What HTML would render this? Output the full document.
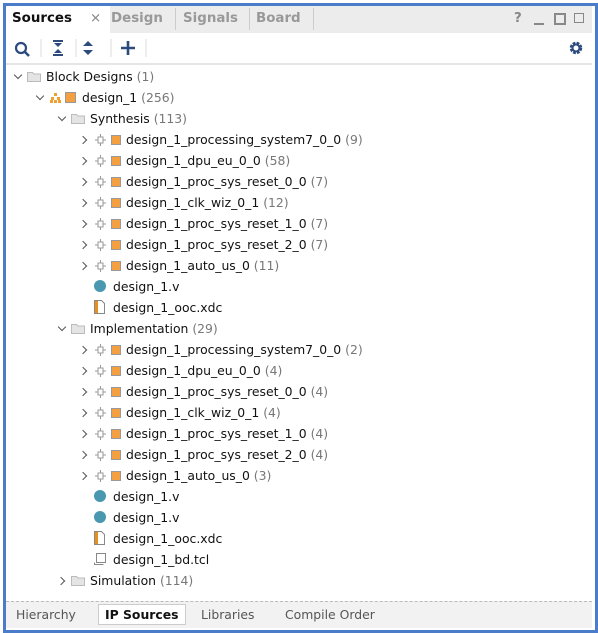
<!DOCTYPE html><html><head><style>
body{margin:0;width:598px;height:633px;background:#fff;font-family:"DejaVu Sans","Liberation Sans",sans-serif;font-size:12.4px;color:#111;position:relative;overflow:hidden}
.frame{position:absolute;left:3px;top:3px;width:589px;height:624px;border:3px solid #4a7cc9}
.tabs{position:absolute;left:6px;top:6px;width:586px;height:27px;background:#ececec}
.tab{position:absolute;top:0;height:27px;line-height:25px;font-weight:bold;color:#999;font-size:13.4px}
.tb{position:absolute;left:6px;top:33px;width:586px;height:30px;background:#fff;border-bottom:2px solid #e6e6e6}
.row{position:absolute;height:21px;line-height:21px;white-space:nowrap}
.cnt{color:#777}
.chev{position:absolute;width:5px;height:5px;border-right:1.4px solid #555;border-bottom:1.4px solid #555}
.bot{position:absolute;left:6px;top:601px;width:586px;height:26px;background:#f2f2f2;border-top:1px dashed #bbb}
.bt{position:absolute;top:5px;color:#555;font-size:12.4px}
</style></head><body>
<div class="frame"></div>
<div class="tabs">
 <div class="tab" style="left:0;width:98px;background:#fff;color:#111;padding-left:6px">Sources<span style="position:absolute;left:84px;color:#888;font-weight:normal">×</span></div>
 <div class="tab" style="left:105px">Design</div>
 <div style="position:absolute;left:169px;top:2px;width:1px;height:22px;background:#ccc"></div>
 <div class="tab" style="left:177px">Signals</div>
 <div style="position:absolute;left:243px;top:2px;width:1px;height:22px;background:#ccc"></div>
 <div class="tab" style="left:250px">Board</div>
 <div style="position:absolute;left:307px;top:2px;width:1px;height:22px;background:#ccc"></div>
 <div class="tab" style="left:508px;color:#888">?</div>
 <div style="position:absolute;left:528px;top:17px;width:10px;height:2px;background:#888"></div>
 <div style="position:absolute;left:548px;top:7px;width:8px;height:8px;border:2px solid #888"></div>
 <div style="position:absolute;left:568px;top:7px;width:8px;height:8px;border:1.5px solid #888"></div>
</div>
<div class="tb">
 <svg width="586" height="30" style="position:absolute;left:0;top:0">
  <circle cx="15" cy="15" r="5" fill="none" stroke="#2c4a7e" stroke-width="2.2"/><line x1="19" y1="19" x2="23" y2="23" stroke="#2c4a7e" stroke-width="2.5"/>
  <line x1="35" y1="6" x2="35" y2="24" stroke="#ddd"/>
  <g stroke="#2c4a7e" stroke-width="2" fill="none"><line x1="47" y1="8" x2="57" y2="8"/><line x1="47" y1="22" x2="57" y2="22"/></g>
  <path d="M48 10 L56 10 L52 14Z M48 20 L56 20 L52 16Z" fill="#2c4a7e"/>
  <line x1="70" y1="6" x2="70" y2="24" stroke="#ddd"/>
  <path d="M82 8 L87 13 L77 13Z M82 22 L87 17 L77 17Z" fill="#2c4a7e"/>
  <line x1="105" y1="6" x2="105" y2="24" stroke="#ddd"/>
  <path d="M122 8 V22 M115 15 H129" stroke="#2c4a7e" stroke-width="2.6"/>
  <line x1="140" y1="6" x2="140" y2="24" stroke="#ddd"/>
  <circle cx="570" cy="15" r="4.5" fill="none" stroke="#2c4a7e" stroke-width="3.5" stroke-dasharray="2.5 1.1"/><circle cx="570" cy="15" r="3.5" fill="none" stroke="#2c4a7e" stroke-width="2"/>
 </svg>
</div>
<div id="tree"></div>
<div class="bot">
 <span class="bt" style="left:10px">Hierarchy</span>
 <span class="bt" style="left:92px;top:2px;padding:2px 6px;background:#fff;border:1px solid #ccc;color:#111;font-weight:bold">IP Sources</span>
 <span class="bt" style="left:195px">Libraries</span>
 <span class="bt" style="left:279px">Compile Order</span>
</div>
<script>
var rows=[
[0,1,'f','Block Designs','(1)'],
[1,1,'bd','design_1','(256)'],
[2,1,'f','Synthesis','(113)'],
[3,2,'ip','design_1_processing_system7_0_0','(9)'],
[3,2,'ip','design_1_dpu_eu_0_0','(58)'],
[3,2,'ip','design_1_proc_sys_reset_0_0','(7)'],
[3,2,'ip','design_1_clk_wiz_0_1','(12)'],
[3,2,'ip','design_1_proc_sys_reset_1_0','(7)'],
[3,2,'ip','design_1_proc_sys_reset_2_0','(7)'],
[3,2,'ip','design_1_auto_us_0','(11)'],
[3,0,'v','design_1.v',''],
[3,0,'x','design_1_ooc.xdc',''],
[2,1,'f','Implementation','(29)'],
[3,2,'ip','design_1_processing_system7_0_0','(2)'],
[3,2,'ip','design_1_dpu_eu_0_0','(4)'],
[3,2,'ip','design_1_proc_sys_reset_0_0','(4)'],
[3,2,'ip','design_1_clk_wiz_0_1','(4)'],
[3,2,'ip','design_1_proc_sys_reset_1_0','(4)'],
[3,2,'ip','design_1_proc_sys_reset_2_0','(4)'],
[3,2,'ip','design_1_auto_us_0','(3)'],
[3,0,'v','design_1.v',''],
[3,0,'v','design_1.v',''],
[3,0,'x','design_1_ooc.xdc',''],
[3,0,'t','design_1_bd.tcl',''],
[2,2,'f','Simulation','(114)']];
var h='';
rows.forEach(function(r,i){
 var y=66+i*21, cx=15+r[0]*22, s='';
 if(r[1]==1) s+='<div class="chev" style="left:'+(cx)+'px;top:'+(y+6)+'px;transform:rotate(45deg)"></div>';
 if(r[1]==2) s+='<div class="chev" style="left:'+(cx-1)+'px;top:'+(y+8)+'px;transform:rotate(-45deg)"></div>';
 var ix=cx+12, tx;
 if(r[2]=='f'){s+='<svg style="position:absolute;left:'+ix+'px;top:'+(y+5)+'px" width="14" height="11"><path d="M0.5 1.5h5l1.5 1.5h6.5v7.5h-13z" fill="#e4e4e4" stroke="#bbb"/></svg>';tx=ix+19;}
 if(r[2]=='bd'){s+='<svg style="position:absolute;left:'+(ix+1)+'px;top:'+(y+5)+'px" width="28" height="12"><g fill="#f0a030"><rect x="4" y="1" width="3" height="3"/><rect x="1" y="5" width="3" height="3"/><rect x="7" y="5" width="3" height="3"/><rect x="0" y="8" width="3" height="3"/><rect x="4" y="8" width="3" height="3"/><rect x="8" y="8" width="3" height="3"/></g><rect x="15.5" y="0.5" width="10" height="10" fill="#f5a040" stroke="#999"/></svg>';tx=ix+33;}
 if(r[2]=='ip'){s+='<svg style="position:absolute;left:'+(ix+2)+'px;top:'+(y+5)+'px" width="28" height="12"><path d="M3 3h5v6h-5zM5.5 0v3M5.5 9v3M0 6h3M8 6h3" fill="none" stroke="#999"/><rect x="16.5" y="1.5" width="9" height="9" fill="#f5a040" stroke="#999"/></svg>';tx=ix+33;}
 if(r[2]=='v'){s+='<div style="position:absolute;left:'+(ix+1)+'px;top:'+(y+4)+'px;width:12px;height:12px;border-radius:50%;background:#4a97b0"></div>';tx=ix+20;}
 if(r[2]=='x'){s+='<svg style="position:absolute;left:'+(ix+1)+'px;top:'+(y+3)+'px" width="12" height="14"><path d="M0.5 0.5h7l3 3v10h-10z" fill="#fff" stroke="#888"/><rect x="1" y="1" width="3" height="12" fill="#e8901c"/></svg>';tx=ix+20;}
 if(r[2]=='t'){s+='<svg style="position:absolute;left:'+(ix+1)+'px;top:'+(y+4)+'px" width="12" height="12"><path d="M2.5 0.5h9v9h-9zM0.5 9.5v2h9" fill="none" stroke="#888"/></svg>';tx=ix+20;}
 s+='<div class="row" style="left:'+tx+'px;top:'+y+'px">'+r[3]+(r[4]?' <span class="cnt">'+r[4]+'</span>':'')+'</div>';
 h+=s;
});
document.getElementById('tree').innerHTML=h;
</script>
</body></html>
